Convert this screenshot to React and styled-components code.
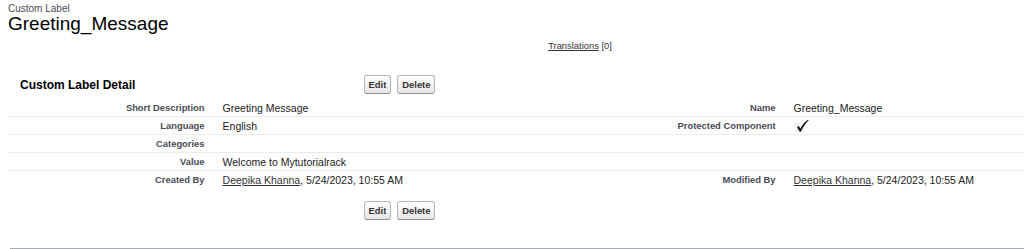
import React from 'react';
import styled, { createGlobalStyle } from 'styled-components';

const GlobalStyle = createGlobalStyle`
  html, body {
    margin: 0;
    padding: 0;
    overflow: hidden;
    background: #fff;
  }
  body {
    font-family: 'Liberation Sans', Arial, sans-serif;
    color: #000;
  }
`;

const Viewport = styled.div`
  width: 100%;
  overflow: hidden;
`;

const Page = styled.div`
  width: 1144px;
  padding-left: 8px;
`;

const Breadcrumb = styled.div`
  padding-top: 3px;
  font-size: 10px;
  line-height: 11px;
  color: #4a4a56;
`;

const PageTitle = styled.h1`
  margin: 0;
  font-size: 19px;
  line-height: 20px;
  font-weight: normal;
  color: #000;
`;

const LinkBar = styled.div`
  margin-top: 6px;
  text-align: center;
  font-size: 9.4px;
  line-height: 12px;
  color: #333;
`;

const TextLink = styled.a`
  color: #333;
  text-decoration: underline;
  cursor: pointer;
`;

const Block = styled.div`
  margin-top: 18px;
  width: 1142px;
`;

const ButtonRow = styled.div`
  display: flex;
  align-items: center;
  height: ${({ $top }) => ($top ? '29px' : '20px')};
  margin-top: ${({ $top }) => ($top ? '0' : '11px')};
`;

const BlockTitle = styled.h2`
  width: 30%;
  margin: 0;
  padding-left: 12px;
  box-sizing: border-box;
  font-size: 12px;
  font-weight: bold;
  color: #000;
`;

const Buttons = styled.div`
  display: flex;
  gap: 6px;
  padding-left: 13px;
`;

const Btn = styled.button`
  height: 19px;
  padding: 0 4px;
  font-family: inherit;
  font-size: 9.4px;
  font-weight: bold;
  color: #333;
  background: linear-gradient(#ffffff, #e6e6e6);
  border: 1px solid #b5b5b5;
  border-bottom-color: #8f8f8f;
  border-radius: 3px;
  cursor: pointer;
`;

const DetailGrid = styled.div`
  display: grid;
  grid-template-columns: 18% 32% 18% 32%;
`;

const Cell = styled.div`
  height: 17px;
  display: flex;
  align-items: center;
  border-bottom: ${({ $last }) => ($last ? '1px solid transparent' : '1px solid #ececec')};
  font-size: ${({ $label }) => ($label ? '9.4px' : '10.5px')};
  font-weight: ${({ $label }) => ($label ? 'bold' : 'normal')};
  color: ${({ $label }) => ($label ? '#4a4a56' : '#1a1a1a')};
  justify-content: ${({ $label }) => ($label ? 'flex-end' : 'flex-start')};
  padding: ${({ $label }) => ($label ? '0 9px 0 0' : '0 0 0 9px')};
  white-space: nowrap;
`;

const Footer = styled.div`
  margin-top: 28px;
  margin-left: 2px;
  height: 2px;
  width: 1142px;
  background: #a3abbd;
`;

const Check = () => (
  <svg width="16" height="14" viewBox="0 0 16 14">
    <rect x="1" y="3" width="10" height="10" fill="#f3f3f3" />
    <path
      d="M3 8.2 L4.8 7 L6.4 9.8 C8.2 6 10.8 2.8 14 0.8 L14.6 1.6 C11.8 4 9.2 7.8 6.8 12.8 L5.8 12.8 Z"
      fill="#111"
    />
  </svg>
);

const rows = [
  ['Short Description', 'Greeting Message', 'Name', 'Greeting_Message'],
  ['Language', 'English', 'Protected Component', 'check'],
  ['Categories', '', '', ''],
  ['Value', 'Welcome to Mytutorialrack', '', ''],
  ['Created By', 'person', 'Modified By', 'person'],
];

const renderValue = (v) => {
  if (v === 'check') return <Check />;
  if (v === 'person')
    return (
      <span>
        <TextLink>Deepika Khanna</TextLink>, 5/24/2023, 10:55 AM
      </span>
    );
  return v;
};

export default function App() {
  return (
    <Viewport>
      <GlobalStyle />
      <Page>
        <Breadcrumb>Custom Label</Breadcrumb>
        <PageTitle>Greeting_Message</PageTitle>
        <LinkBar>
          <TextLink>Translations</TextLink> [0]
        </LinkBar>
        <Block>
          <ButtonRow $top>
            <BlockTitle>Custom Label Detail</BlockTitle>
            <Buttons>
              <Btn>Edit</Btn>
              <Btn>Delete</Btn>
            </Buttons>
          </ButtonRow>
          <DetailGrid>
            {rows.map((r, i) => {
              const last = i === rows.length - 1;
              return (
                <React.Fragment key={i}>
                  <Cell $label $last={last}>{r[0]}</Cell>
                  <Cell $last={last}>{renderValue(r[1])}</Cell>
                  <Cell $label $last={last}>{r[2]}</Cell>
                  <Cell $last={last}>{renderValue(r[3])}</Cell>
                </React.Fragment>
              );
            })}
          </DetailGrid>
          <ButtonRow>
            <BlockTitle />
            <Buttons>
              <Btn>Edit</Btn>
              <Btn>Delete</Btn>
            </Buttons>
          </ButtonRow>
        </Block>
        <Footer />
      </Page>
    </Viewport>
  );
}
